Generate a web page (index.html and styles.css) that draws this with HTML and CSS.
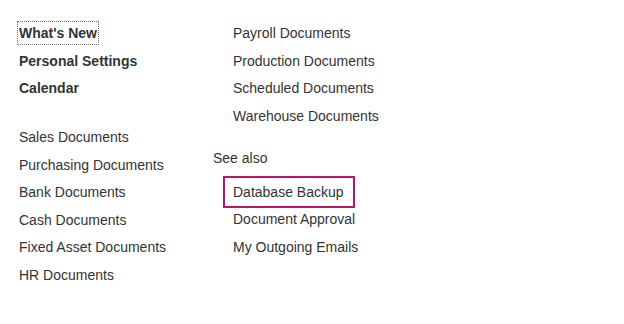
FILE: index.html
```html
<!DOCTYPE html>
<html>
<head>
    <meta name="viewport" content="width=device-width, initial-scale=1">
    <link rel="stylesheet" href="styles.css">
</head>
<body>
    <div class="page">
        <div class="column">
            <ul class="links bold">
                <li><a href="#" class="focused">What's New</a></li>
                <li><a href="#">Personal Settings</a></li>
                <li><a href="#">Calendar</a></li>
            </ul>
            <ul class="links documents">
                <li><a href="#">Sales Documents</a></li>
                <li><a href="#">Purchasing Documents</a></li>
                <li><a href="#">Bank Documents</a></li>
                <li><a href="#">Cash Documents</a></li>
                <li><a href="#">Fixed Asset Documents</a></li>
                <li><a href="#">HR Documents</a></li>
            </ul>
        </div>
        <div class="column second">
            <ul class="links indented">
                <li><a href="#">Payroll Documents</a></li>
                <li><a href="#">Production Documents</a></li>
                <li><a href="#">Scheduled Documents</a></li>
                <li><a href="#">Warehouse Documents</a></li>
            </ul>
            <div class="see-also">See also</div>
            <ul class="links indented related">
                <li class="current-row"><a href="#" class="current">Database Backup</a></li>
                <li><a href="#">Document Approval</a></li>
                <li><a href="#">My Outgoing Emails</a></li>
            </ul>
        </div>
    </div>
</body>
</html>
```

FILE: styles.css
```css
body {
    margin: 0;
    background-color: white;
    color: #333333;
    font-family: "Liberation Sans", Arial, sans-serif;
    font-size: 14px;
}

.page {
    display: grid;
    grid-template-columns: 194px 1fr;
    padding: 20px 0 0 19px;
}

.links {
    list-style: none;
    margin: 0;
    padding: 0;
}

.links li {
    height: 27.5px;
    line-height: 27.5px;
}

.links a {
    color: #333333;
    text-decoration: none;
}

.bold a {
    font-weight: bold;
}

.focused {
    display: inline-block;
    line-height: 22px;
    margin-left: -1px;
    padding: 0 1px;
    outline: 1px dotted #777777;
}

.documents {
    margin-top: 21.5px;
}

.indented {
    padding-left: 20px;
}

.see-also {
    height: 27.5px;
    line-height: 27.5px;
    margin-top: 15px;
}

.related {
    margin-top: 3.5px;
}

.links li.current-row {
    height: 30px;
}

.current {
    display: inline-block;
    line-height: 28px;
    margin-left: -10px;
    padding: 0 9px 0 8px;
    border: 2px solid #b8166e;
}
```
